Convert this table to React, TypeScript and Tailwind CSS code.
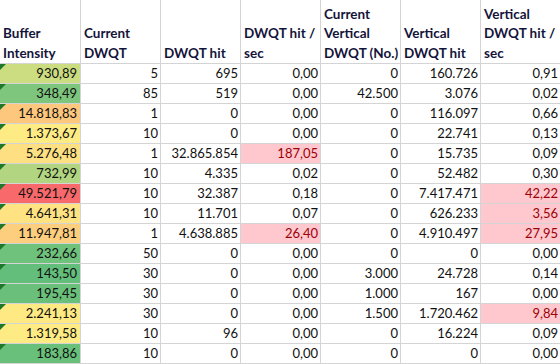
import React from "react";

type Row = {
  a: string;
  bg: string;
  c: string[];
  pink: number[];
};

const rows: Row[] = [
  { a: "930,89", bg: "bg-[#cbdc81]", c: ["5", "695", "0,00", "0", "160.726", "0,91"], pink: [] },
  { a: "348,49", bg: "bg-[#7ec67d]", c: ["85", "519", "0,00", "42.500", "3.076", "0,02"], pink: [] },
  { a: "14.818,83", bg: "bg-[#fdc77d]", c: ["1", "0", "0,00", "0", "116.097", "0,66"], pink: [] },
  { a: "1.373,67", bg: "bg-[#ffeb84]", c: ["10", "0", "0,00", "0", "22.741", "0,13"], pink: [] },
  { a: "5.276,48", bg: "bg-[#fee082]", c: ["1", "32.865.854", "187,05", "0", "15.735", "0,09"], pink: [2] },
  { a: "732,99", bg: "bg-[#b1d580]", c: ["10", "4.335", "0,02", "0", "52.482", "0,30"], pink: [] },
  { a: "49.521,79", bg: "bg-[#f8696b]", c: ["10", "32.387", "0,18", "0", "7.417.471", "42,22"], pink: [5] },
  { a: "4.641,31", bg: "bg-[#ffe282]", c: ["10", "11.701", "0,07", "0", "626.233", "3,56"], pink: [5] },
  { a: "11.947,81", bg: "bg-[#fdce7e]", c: ["1", "4.638.885", "26,40", "0", "4.910.497", "27,95"], pink: [2, 5] },
  { a: "232,66", bg: "bg-[#6fc27c]", c: ["50", "0", "0,00", "0", "0", "0,00"], pink: [] },
  { a: "143,50", bg: "bg-[#63be7b]", c: ["30", "0", "0,00", "3.000", "24.728", "0,14"], pink: [] },
  { a: "195,45", bg: "bg-[#6ac07b]", c: ["30", "0", "0,00", "1.000", "167", "0,00"], pink: [] },
  { a: "2.241,13", bg: "bg-[#ffe983]", c: ["30", "0", "0,00", "1.500", "1.720.462", "9,84"], pink: [5] },
  { a: "1.319,58", bg: "bg-[#ffeb84]", c: ["10", "96", "0,00", "0", "16.224", "0,09"], pink: [] },
  { a: "183,86", bg: "bg-[#68c07b]", c: ["10", "0", "0,00", "0", "0", "0,00"], pink: [] },
];

const headers: string[][] = [
  ["Buffer", "Intensity"],
  ["Current", "DWQT"],
  ["DWQT hit"],
  ["DWQT hit /", "sec"],
  ["Current", "Vertical", "DWQT (No.)"],
  ["Vertical", "DWQT hit"],
  ["Vertical", "DWQT hit /", "sec"],
];

const widths = ["w-[81px]", "w-[80px]", "w-[80px]", "w-[80px]", "w-[80px]", "w-[80px]", "w-[79px]"];

export default function App() {
  return (
    <div
      className="w-[560px] h-[364px] overflow-hidden bg-white text-[13px] text-[#111]"
      style={{ fontFamily: "Lato, 'Liberation Sans', sans-serif" }}
    >
      {/* header */}
      <div className="flex h-[64px] border-b border-[#d4d4d4]">
        {headers.map((h, i) => (
          <div
            key={i}
            className={`${widths[i]} shrink-0 flex flex-col justify-end pl-[3px] text-[13.5px] font-bold leading-[19.5px] text-[#14143a] ${
              i < 6 ? "border-r border-[#d4d4d4]" : ""
            }`}
          >
            {h.map((l, j) => (
              <div key={j} className="whitespace-nowrap">
                {l}
              </div>
            ))}
          </div>
        ))}
      </div>
      {rows.map((r, ri) => (
        <div key={ri} className="flex h-[20px] border-b border-[#d4d4d4] leading-[19px]">
          <div
            className={`relative w-[81px] shrink-0 border-r border-[#d4d4d4] text-right pr-[3px] ${r.bg}`}
          >
            <span className="absolute left-0 top-0 w-0 h-0 border-t-[6px] border-r-[6px] border-t-[#1e7a2a] border-r-transparent" />
            {r.a}
          </div>
          {r.c.map((v, ci) => {
            const pink = r.pink.includes(ci);
            return (
              <div
                key={ci}
                className={`${widths[ci + 1]} shrink-0 text-right pr-[2px] ${
                  ci < 5 ? "border-r border-[#d4d4d4]" : ""
                } ${pink ? "bg-[#ffc7ce] text-[#9c0006]" : ""}`}
              >
                {v}
              </div>
            );
          })}
        </div>
      ))}
    </div>
  );
}
